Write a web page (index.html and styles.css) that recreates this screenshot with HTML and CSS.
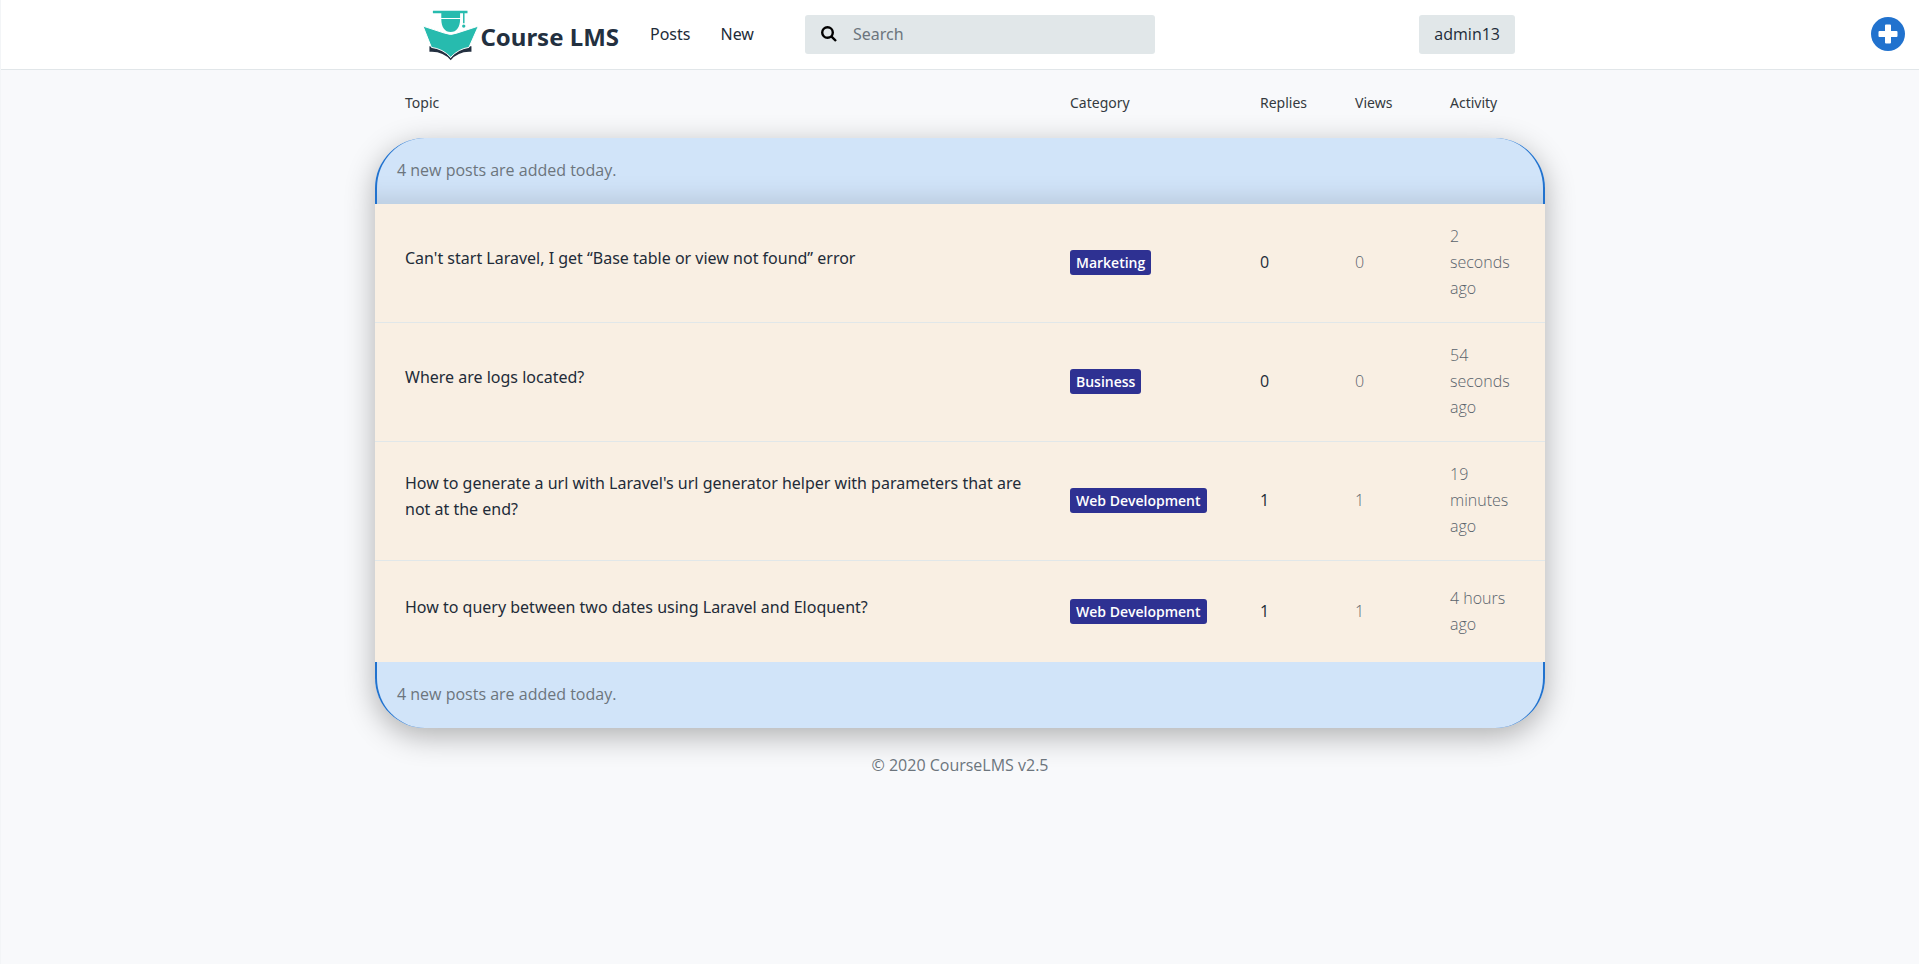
FILE: index.html
```html
<!DOCTYPE html>
<html lang="en">
<head>
<meta charset="utf-8">
<title>Course LMS</title>
<link rel="stylesheet" href="styles.css">
</head>
<body>
<header class="topbar">
  <div class="topbar-inner">
    <a class="brand" href="#" aria-label="Course LMS">
      <svg class="brand-mark" viewBox="0 0 56 52" aria-hidden="true">
        <path fill="#27bbae" d="M10 1.500h35v2.500h-3v10h-1.500V4h-3v4.800h-19V4H10zM18.500 9.800h19C37.500 18 34 23 28 23s-9.500-5-9.500-13.200z"/>
        <circle fill="#27bbae" cx="41.200" cy="17" r="1.700"/>
        <path fill="#233040" d="M6.500 37.500Q20 37 28 49.500 36 37 49 37.500v5.500Q36 42 28 51.500 20 42 6.500 43z"/>
        <path fill="#27bbae" stroke="#fff" stroke-width="1" d="M0 17 21.500 24Q28 27 34.500 24L56 17 46.500 38.500Q36 40 28 48.500 20 40 8.500 38.500z"/>
      </svg>
      <span class="brand-name">Course LMS</span>
    </a>
    <nav class="nav">
      <a href="#">Posts</a>
      <a href="#">New</a>
    </nav>
    <form class="search" role="search">
      <svg class="search-icon" viewBox="0 0 16 16" aria-hidden="true"><circle cx="6.500" cy="6.500" r="5.300"/><path d="M10.300 10.300 15 15"/></svg>
      <input type="search" placeholder="Search" aria-label="Search">
    </form>
    <button class="account" type="button">admin13</button>
  </div>
  <button class="add" type="button" aria-label="Add post">
    <svg viewBox="0 0 34 34" aria-hidden="true"><circle cx="17" cy="17" r="17" fill="#2172ce"/><path d="M14 8.500q0-1 1-1h4q1 0 1 1V14h5.500q1 0 1 1v4q0 1-1 1H20v5.500q0 1-1 1h-4q-1 0-1-1V20H8.500q-1 0-1-1v-4q0-1 1-1H14z" fill="#fff"/></svg>
  </button>
</header>
<main class="page">
  <table class="posts">
    <thead>
      <tr class="row head"><th>Topic</th><th>Category</th><th>Replies</th><th>Views</th><th>Activity</th></tr>
    </thead>
    <tbody class="panel">
      <tr class="notice notice-top"><td colspan="5">4 new posts are added today.</td></tr>
      <tr class="row post"><td><a class="title" href="#">Can't start Laravel, I get “Base table or view not found” error</a></td><td><a class="badge" href="#">Marketing</a></td><td>0</td><td class="muted">0</td><td class="muted">2 seconds ago</td></tr>
      <tr class="row post"><td><a class="title" href="#">Where are logs located?</a></td><td><a class="badge" href="#">Business</a></td><td>0</td><td class="muted">0</td><td class="muted">54 seconds ago</td></tr>
      <tr class="row post"><td><a class="title" href="#">How to generate a url with Laravel's url generator helper with parameters that are not at the end?</a></td><td><a class="badge" href="#">Web Development</a></td><td>1</td><td class="muted">1</td><td class="muted">19 minutes ago</td></tr>
      <tr class="row post"><td><a class="title" href="#">How to query between two dates using Laravel and Eloquent?</a></td><td><a class="badge" href="#">Web Development</a></td><td>1</td><td class="muted">1</td><td class="muted">4 hours ago</td></tr>
      <tr class="notice notice-bottom"><td colspan="5">4 new posts are added today.</td></tr>
    </tbody>
  </table>
</main>
<footer class="footer">© 2020 CourseLMS v2.5</footer>
</body>
</html>
```
FILE: styles.css
```css
* { box-sizing: border-box; }
body {
  margin: 0;
  min-height: 100vh;
  border-left: 1px solid #f3f5f7;
  background: #f8f9fb;
  color: #222b38;
  font: 400 16px/26px "Open Sans", "Liberation Sans", sans-serif;
}
a { color: inherit; text-decoration: none; }
button, input { font: inherit; color: inherit; border: 0; }

.topbar {
  position: relative;
  background: #fff;
  border-bottom: 1px solid #e1e6e9;
}
.topbar-inner {
  display: flex;
  align-items: center;
  max-width: 1140px;
  height: 69px;
  margin: 0 auto;
  padding: 0 15px 0 33px;
}
.brand { display: flex; align-items: center; gap: 2px; width: 196px; }
.brand-mark { width: 56px; height: 52px; }
.brand-name { padding-top: 4px; font: 700 24px/32px "Noto Sans", sans-serif; color: #233040; white-space: nowrap; }
.nav { display: flex; gap: 30px; margin-left: 31px; width: 155px; padding-bottom: 2px; }
.nav, .search, .title, .head { font-family: "Noto Sans", "Open Sans", sans-serif; }
.search {
  display: flex;
  align-items: center;
  gap: 16px;
  flex: 0 1 350px;
  height: 39px;
  padding: 0 16px 2px;
  background: #e1e7e9;
  border-radius: 3px;
}
.search-icon { flex: none; width: 16px; height: 16px; fill: none; stroke: #000; stroke-width: 2.400; }
.search input { flex: 1; min-width: 0; padding: 0; background: none; outline: 0; }
.search input::placeholder { color: #6c757d; opacity: 1; }
.account {
  margin-left: auto;
  height: 39px;
  padding: 0 15px 2px;
  background: #e1e7e9;
  border-radius: 3px;
}
.add { position: absolute; right: 14px; top: 17px; width: 34px; height: 34px; padding: 0; background: none; }
.add svg { display: block; }

.page { max-width: 1170px; margin: 0 auto; }
.posts, .posts thead, .panel { display: block; }
.row {
  display: grid;
  grid-template-columns: 7fr 2fr 1fr 1fr 1fr;
  align-items: center;
  padding: 0 15px;
}
.row > * { padding: 0 15px; text-align: left; }
.head { height: 68px; padding-bottom: 2px; font-size: 14px; color: #343a40; }
.head th { font-weight: 400; }
.panel { border-radius: 50px; box-shadow: 0 8px 30px rgba(0, 0, 0, .3); }
.notice {
  display: block;
  padding: 19px 20px 21px;
  background: #d1e4f9;
  border: 0 solid #2172ce;
  border-width: 0 2px;
  color: #6c757d;
}
.notice td { display: block; padding: 0; }
.notice-top { border-radius: 50px 50px 0 0; box-shadow: inset 0 -30px 24px -24px rgba(0, 0, 0, .12); }
.notice-bottom { border-radius: 0 0 50px 50px; }
.post { min-height: 102px; padding-top: 19px; padding-bottom: 21px; background: #f9efe3; }
.post + .post { border-top: 1px solid #e1e7e9; }
.title { display: block; margin-bottom: 8px; }
.badge {
  display: inline-block;
  padding: 0 6px;
  background: #2e3192;
  border-radius: 3px;
  color: #fff;
  font-size: 14px;
  font-weight: 600;
  line-height: 25px;
}
.muted { color: #59636c; font-weight: 300; }
.footer { padding: 24px 0; text-align: center; color: #6c757d; }
```
